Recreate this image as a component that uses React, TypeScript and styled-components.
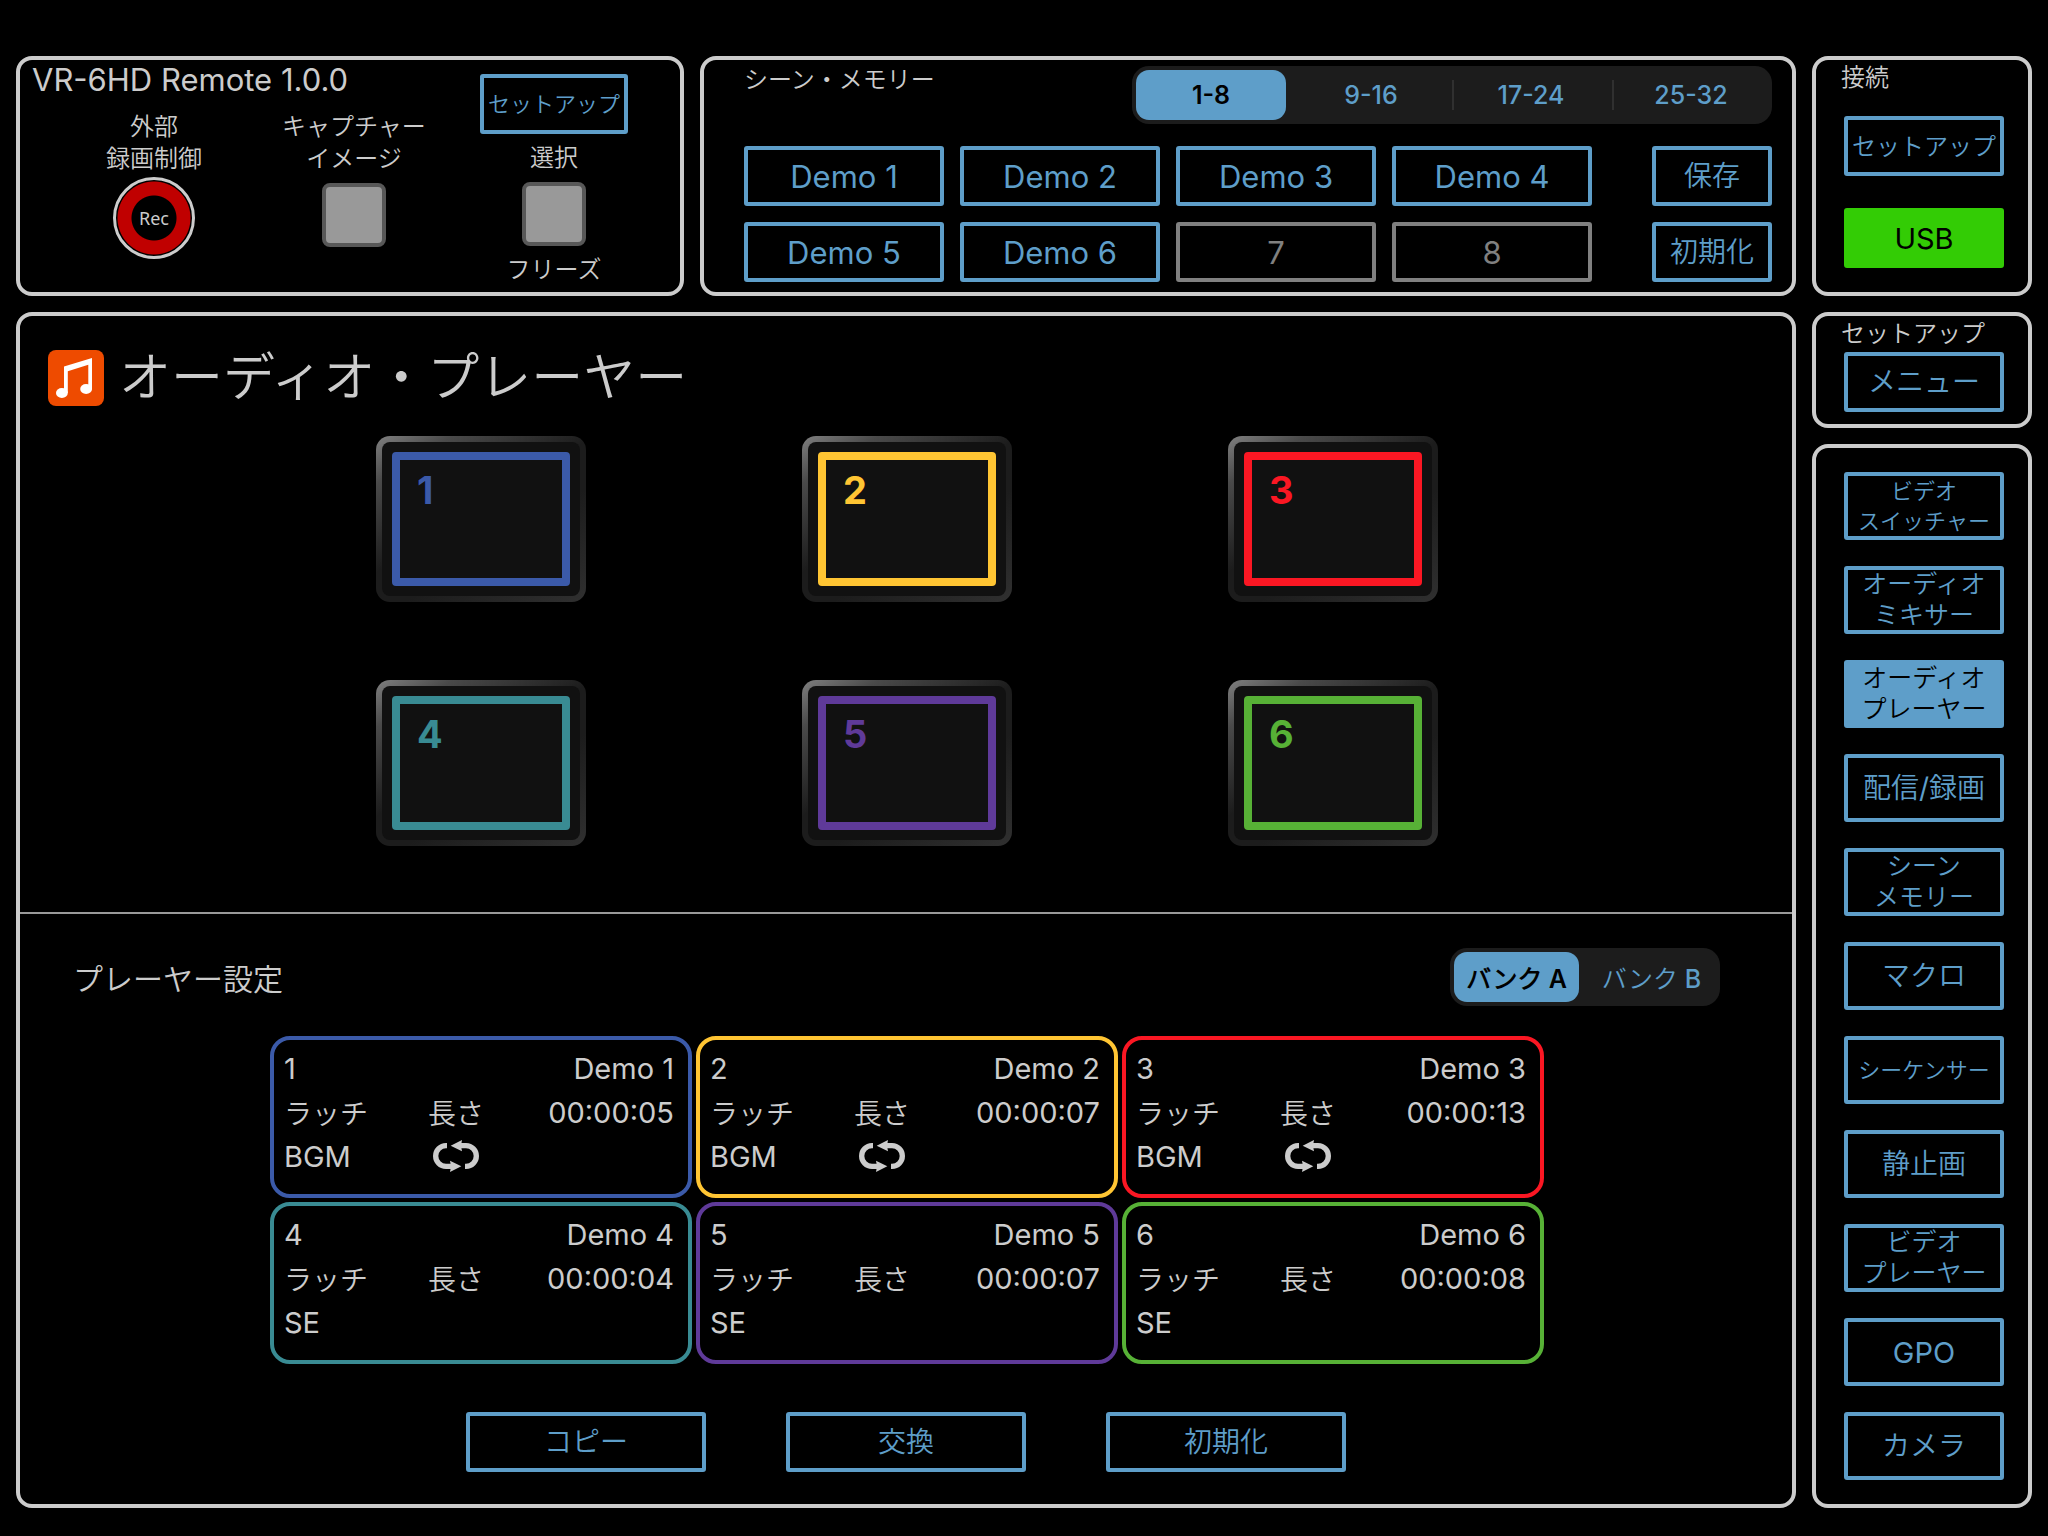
import React, { useState } from "react";
import styled, { createGlobalStyle } from "styled-components";

const color = {
  ink: "#cccccc",
  accent: "#5e9ec9",
  disabled: "#808080",
  track: "#1c1c1c",
  online: "#33cc05",
};

const GlobalStyle = createGlobalStyle`
  *, *::before, *::after { box-sizing: border-box; }
  body {
    margin: 0;
    background: #000;
    color: ${color.ink};
    font-family: Inter, "Noto Sans CJK JP DemiLight", "Noto Sans CJK JP Light", "Noto Sans CJK JP", sans-serif;
    font-weight: 400;
  }
  button { font: inherit; cursor: pointer; }
  h1, h2, p { margin: 0; font-weight: inherit; }
`;

/* ---------- page frame ---------- */

const Page = styled.div`
  display: grid;
  grid-template-columns: minmax(0, 1fr) 220px;
  gap: 16px;
  min-height: 100vh;
  padding: 56px 16px 28px;
`;

const Column = styled.div`
  display: flex;
  flex-direction: column;
  gap: 16px;
`;

const TopRow = styled.div`
  display: grid;
  grid-template-columns: minmax(0, 668fr) minmax(0, 1096fr);
  gap: 16px;
`;

const Panel = styled.section`
  border: 4px solid ${color.ink};
  border-radius: 16px;
`;

const PanelLabel = styled.h2`
  font-size: 24px;
  line-height: 28px;
`;

/* ---------- buttons ---------- */

const OutlineButton = styled.button<{ $size?: number; $height?: number; $active?: boolean }>`
  display: flex;
  align-items: center;
  justify-content: center;
  width: 100%;
  height: ${(p) => p.$height ?? 60}px;
  padding: 0;
  border: 4px solid ${color.accent};
  border-radius: 3px;
  background: ${(p) => (p.$active ? color.accent : "#000")};
  color: ${(p) => (p.$active ? "#000" : color.accent)};
  font-size: ${(p) => p.$size ?? 28}px;
  line-height: ${(p) => ((p.$size ?? 28) < 24 ? 30 : 31)}px;
  white-space: pre-line;
  &:disabled {
    border-color: ${color.disabled};
    color: ${color.disabled};
    cursor: default;
  }
`;

const UsbButton = styled(OutlineButton)`
  border-color: ${color.online};
  background: ${color.online};
  color: #000;
`;

/* ---------- segmented switch ---------- */

const SegmentTrack = styled.div<{ $width: number }>`
  display: flex;
  align-items: center;
  width: ${(p) => p.$width}px;
  height: 58px;
  border-radius: 17px;
  background: ${color.track};
`;

const SegmentCell = styled.div<{ $divided: boolean }>`
  flex: 1;
  display: flex;
  align-items: center;
  &::before {
    content: "";
    width: 2px;
    height: 30px;
    background: ${(p) => (p.$divided ? "#303030" : "transparent")};
  }
`;

const Segment = styled.button<{ $on: boolean }>`
  flex: 1;
  height: 50px;
  margin: 0 6px 0 2px;
  padding: 0;
  border: 0;
  border-radius: 13px;
  background: ${(p) => (p.$on ? color.accent : "transparent")};
  color: ${(p) => (p.$on ? "#000" : color.accent)};
  font-size: 25px;
  font-weight: ${(p) => (p.$on ? 600 : 500)};
  white-space: nowrap;
`;

function Segmented({ label, items, width }: { label: string; items: string[]; width: number }) {
  const [current, setCurrent] = useState(0);
  return (
    <SegmentTrack role="group" aria-label={label} $width={width}>
      {items.map((item, i) => (
        <SegmentCell key={item} $divided={i > 0 && i !== current && i - 1 !== current}>
          <Segment
            type="button"
            aria-pressed={i === current}
            $on={i === current}
            onClick={() => setCurrent(i)}
          >
            {item}
          </Segment>
        </SegmentCell>
      ))}
    </SegmentTrack>
  );
}

/* ---------- remote panel ---------- */

const RemotePanel = styled(Panel)`
  display: grid;
  grid-template-columns: minmax(0, 422fr) minmax(0, 200fr);
  padding: 0 26px 0 12px;
`;

const RemoteTitle = styled.h1`
  font-size: 31px;
  line-height: 40px;
  white-space: nowrap;
`;

const ControlPair = styled.div`
  display: grid;
  grid-template-columns: 1fr 1fr;
  padding: 11px 0 0 22px;
`;

const RemoteMain = styled.div`
  min-width: 0;
`;

const Control = styled.div`
  display: flex;
  flex-direction: column;
  align-items: center;
`;

const ControlText = styled.p`
  font-size: 24px;
  line-height: 32px;
  text-align: center;
  white-space: pre-line;
`;

const SelectColumn = styled(Control)`
  padding-top: 14px;
`;

const RemoteSetup = styled(OutlineButton)`
  width: 148px;
  margin-bottom: 8px;
`;

const RecButton = styled.button`
  display: flex;
  align-items: center;
  justify-content: center;
  width: 82px;
  height: 82px;
  margin-top: 2px;
  padding: 0;
  border: 3px solid ${color.ink};
  border-radius: 50%;
  background: radial-gradient(circle, #000 22px, #c00000 23px, #c00000 36px, #000 37px);
  color: ${color.ink};
  font-family: "Noto Sans", "Open Sans", sans-serif;
  font-size: 18px;
`;

const SquareButton = styled.button`
  width: 64px;
  height: 64px;
  margin: 8px 0;
  border: 4px solid #585858;
  border-radius: 8px;
  background: #999;
`;

/* ---------- scene memory ---------- */

const ScenePanel = styled(Panel)`
  display: flex;
  flex-direction: column;
  gap: 22px;
  padding: 6px 20px 10px 40px;
`;

const SceneHeader = styled.header`
  display: flex;
  justify-content: space-between;
  align-items: flex-start;
`;

const SceneGrid = styled.div`
  display: grid;
  grid-template-columns: minmax(0, 1fr) 120px;
  gap: 60px;
`;

const SceneSlots = styled.div`
  display: grid;
  grid-template-columns: repeat(4, 1fr);
  gap: 16px;
`;

const SceneActions = styled.div`
  display: grid;
  gap: 16px;
`;

/* ---------- right column ---------- */

const SidePanel = styled(Panel)`
  padding: 4px 24px 12px 25px;
  & > div { padding-left: 3px; }
`;

const ConnectPanel = styled(SidePanel)`
  display: flex;
  flex-direction: column;
  gap: 24px;
  min-height: 240px;
`;

const ConnectActions = styled.div`
  display: grid;
  gap: 32px;
`;

const SetupAction = styled.div`
  padding-top: 4px;
`;

const NavPanel = styled(Panel)`
  flex: 1;
  padding: 24px 24px 24px 28px;
`;

const NavList = styled.nav`
  display: grid;
  gap: 26px;
`;

/* ---------- audio player ---------- */

const PlayerPanel = styled(Panel)`
  flex: 1;
`;

const PlayerHeader = styled.header`
  display: flex;
  align-items: center;
  gap: 15px;
  height: 56px;
  margin: 34px 28px 30px;
`;

const PlayerTitle = styled.h1`
  font-size: 52px;
  line-height: 56px;
`;

const PadGrid = styled.div`
  display: grid;
  grid-template-columns: repeat(3, 210px);
  gap: 78px 216px;
  justify-content: center;
  padding: 0 0 66px 2px;
`;

const Pad = styled.button`
  height: 166px;
  padding: 6px;
  border: 0;
  border-radius: 14px;
  background: linear-gradient(148deg, #808080 0%, #4a4a4a 16%, #1c1c1c 46%, #1c1c1c 62%, #303030 100%);
`;

const PadFace = styled.span`
  display: block;
  height: 100%;
  padding: 10px;
  border-radius: 8px;
  background: #111;
`;

const PadNumber = styled.span<{ $tint: string }>`
  display: block;
  height: 100%;
  padding: 6px 17px;
  border: 8px solid ${(p) => p.$tint};
  border-radius: 4px;
  color: ${(p) => p.$tint};
  font-size: 38px;
  font-weight: 700;
  line-height: 48px;
  text-align: left;
`;

const Settings = styled.section`
  border-top: 2px solid #999;
  padding: 34px 0 32px;
`;

const SettingsHeader = styled.header`
  display: flex;
  align-items: center;
  justify-content: space-between;
  padding: 0 72px 0 53px;
`;

const SettingsTitle = styled.h2`
  padding-top: 4px;
  font-size: 30px;
  line-height: 40px;
`;

const CardGrid = styled.div`
  display: grid;
  grid-template-columns: repeat(3, 422px);
  gap: 4px;
  justify-content: center;
  padding: 30px 0 48px 2px;
`;

const Card = styled.article<{ $tint: string }>`
  display: grid;
  grid-template-columns: 144px 1fr auto;
  grid-auto-rows: 44px;
  align-items: center;
  height: 162px;
  padding: 6px 14px 0 10px;
  border: 4px solid ${(p) => p.$tint};
  border-radius: 20px;
  font-size: 28px;
`;

const CardFigure = styled.span`
  font-size: 29px;
`;

const CardName = styled(CardFigure)`
  grid-column: 2 / 4;
  text-align: right;
`;

const LoopMark = styled.svg`
  display: block;
  margin-left: 5px;
`;

const ActionRow = styled.div`
  display: flex;
  justify-content: center;
  gap: 80px;
`;

const ActionButton = styled(OutlineButton)`
  width: 240px;
`;

/* ---------- drawings ---------- */

function MusicIcon() {
  return (
    <svg width="56" height="56" viewBox="0 0 56 56" aria-hidden="true">
      <rect width="56" height="56" rx="8" fill="#ee4b00" />
      <path
        d="M16 16.5 L44 8 V39.5 H40.3 V14.8 L19.8 21.3 V43 H16 Z"
        fill="#fff"
      />
      <ellipse cx="13.9" cy="43" rx="5.9" ry="5" fill="#fff" />
      <ellipse cx="38.1" cy="39" rx="5.9" ry="5" fill="#fff" />
    </svg>
  );
}

function LoopIcon() {
  return (
    <LoopMark width="46" height="32" viewBox="39 30 138 96" role="img" aria-label="リピート">
      <g fill="none" stroke={color.ink} strokeWidth="16">
        <path d="M81 47 H78 A31 31 0 0 0 78 109 H93" />
        <path d="M135 109 H138 A31 31 0 0 0 138 47 H123" />
      </g>
      <path d="M90 92 L124 109 L90 126 L93 109 Z" fill={color.ink} />
      <path d="M126 30 L92 47 L126 64 L123 47 Z" fill={color.ink} />
    </LoopMark>
  );
}

/* ---------- data ---------- */

const scenes = [
  { name: "Demo 1" },
  { name: "Demo 2" },
  { name: "Demo 3" },
  { name: "Demo 4" },
  { name: "Demo 5" },
  { name: "Demo 6" },
  { name: "7", empty: true },
  { name: "8", empty: true },
];

const navItems = [
  { text: "ビデオ\nスイッチャー", size: 22 },
  { text: "オーディオ\nミキサー", size: 25 },
  { text: "オーディオ\nプレーヤー", size: 25 },
  { text: "配信/録画", size: 28 },
  { text: "シーン\nメモリー", size: 25 },
  { text: "マクロ", size: 28 },
  { text: "シーケンサー", size: 22 },
  { text: "静止画", size: 28 },
  { text: "ビデオ\nプレーヤー", size: 25 },
  { text: "GPO", size: 29 },
  { text: "カメラ", size: 28 },
];

const tracks = [
  { tint: "#3b5aa9", time: "00:00:05", kind: "BGM" },
  { tint: "#ffc533", time: "00:00:07", kind: "BGM" },
  { tint: "#fb1723", time: "00:00:13", kind: "BGM" },
  { tint: "#398b93", time: "00:00:04", kind: "SE" },
  { tint: "#5f3a99", time: "00:00:07", kind: "SE" },
  { tint: "#57b136", time: "00:00:08", kind: "SE" },
];

export default function App() {
  const [page, setPage] = useState("オーディオ\nプレーヤー");

  return (
    <>
      <GlobalStyle />
      <Page lang="ja">
        <Column>
          <TopRow>
            <RemotePanel>
              <RemoteMain>
                <RemoteTitle>VR-6HD Remote 1.0.0</RemoteTitle>
                <ControlPair>
                  <Control>
                    <ControlText>{"外部\n録画制御"}</ControlText>
                    <RecButton type="button">Rec</RecButton>
                  </Control>
                  <Control>
                    <ControlText id="capture">{"キャプチャー\nイメージ"}</ControlText>
                    <SquareButton type="button" aria-labelledby="capture" />
                  </Control>
                </ControlPair>
              </RemoteMain>
              <SelectColumn>
                <RemoteSetup type="button" $size={22}>セットアップ</RemoteSetup>
                <ControlText>選択</ControlText>
                <SquareButton type="button" aria-labelledby="freeze" />
                <ControlText id="freeze">フリーズ</ControlText>
              </SelectColumn>
            </RemotePanel>

            <ScenePanel>
              <SceneHeader>
                <PanelLabel>シーン・メモリー</PanelLabel>
                <Segmented
                  label="シーン・メモリー"
                  items={["1-8", "9-16", "17-24", "25-32"]}
                  width={640}
                />
              </SceneHeader>
              <SceneGrid>
                <SceneSlots>
                  {scenes.map((s) => (
                    <OutlineButton key={s.name} type="button" $size={31} disabled={s.empty}>
                      {s.name}
                    </OutlineButton>
                  ))}
                </SceneSlots>
                <SceneActions>
                  <OutlineButton type="button">保存</OutlineButton>
                  <OutlineButton type="button">初期化</OutlineButton>
                </SceneActions>
              </SceneGrid>
            </ScenePanel>
          </TopRow>

          <PlayerPanel>
            <PlayerHeader>
              <MusicIcon />
              <PlayerTitle>オーディオ・プレーヤー</PlayerTitle>
            </PlayerHeader>
            <PadGrid>
              {tracks.map((t, i) => (
                <Pad key={i} type="button">
                  <PadFace>
                    <PadNumber $tint={t.tint}>{i + 1}</PadNumber>
                  </PadFace>
                </Pad>
              ))}
            </PadGrid>

            <Settings>
              <SettingsHeader>
                <SettingsTitle>プレーヤー設定</SettingsTitle>
                <Segmented label="バンク" items={["バンク A", "バンク B"]} width={270} />
              </SettingsHeader>
              <CardGrid>
                {tracks.map((t, i) => (
                  <Card key={i} $tint={t.tint}>
                    <CardFigure>{i + 1}</CardFigure>
                    <CardName>Demo {i + 1}</CardName>
                    <span>ラッチ</span>
                    <span>長さ</span>
                    <CardFigure>{t.time}</CardFigure>
                    <CardFigure>{t.kind}</CardFigure>
                    {t.kind === "BGM" && <LoopIcon />}
                  </Card>
                ))}
              </CardGrid>
              <ActionRow>
                <ActionButton type="button">コピー</ActionButton>
                <ActionButton type="button">交換</ActionButton>
                <ActionButton type="button">初期化</ActionButton>
              </ActionRow>
            </Settings>
          </PlayerPanel>
        </Column>

        <Column>
          <ConnectPanel>
            <PanelLabel>接続</PanelLabel>
            <ConnectActions>
              <OutlineButton type="button" $size={24}>セットアップ</OutlineButton>
              <UsbButton type="button" $size={29}>USB</UsbButton>
            </ConnectActions>
          </ConnectPanel>
          <SidePanel>
            <PanelLabel>セットアップ</PanelLabel>
            <SetupAction>
              <OutlineButton type="button">メニュー</OutlineButton>
            </SetupAction>
          </SidePanel>
          <NavPanel>
            <NavList>
              {navItems.map((n) => (
                <OutlineButton
                  key={n.text}
                  type="button"
                  aria-current={n.text === page ? "page" : undefined}
                  $size={n.size}
                  $height={68}
                  $active={n.text === page}
                  onClick={() => setPage(n.text)}
                >
                  {n.text}
                </OutlineButton>
              ))}
            </NavList>
          </NavPanel>
        </Column>
      </Page>
    </>
  );
}
